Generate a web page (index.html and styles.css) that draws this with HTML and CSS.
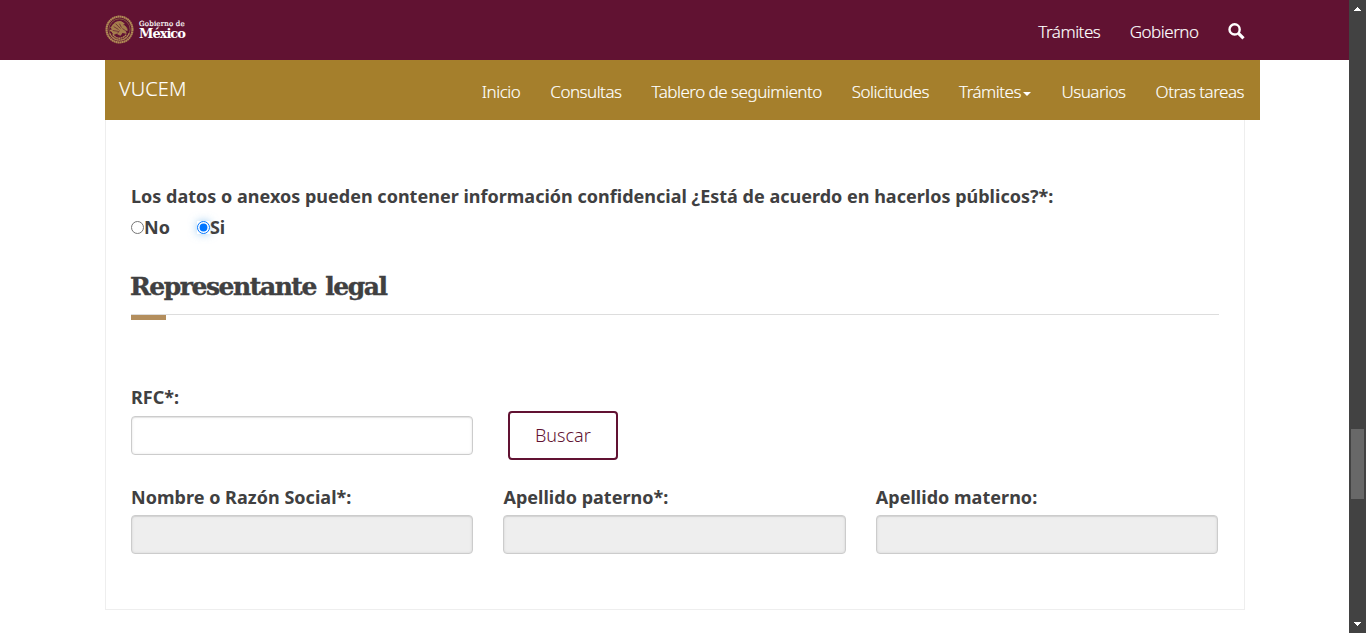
FILE: index.html
```html
<!DOCTYPE html>
<html lang="es">
<head>
<meta charset="utf-8">
<title>VUCEM</title>
<link rel="stylesheet" href="styles.css">
</head>
<body>
<div class="page">
  <header class="gov-bar">
    <div class="gov-inner">
      <a class="gov-logo">
        <svg class="seal" viewBox="0 0 30 30" fill="none" stroke="#b08b55">
          <circle cx="15" cy="15" r="13.4" stroke-width="2.2" stroke-dasharray="1.8 .3"/>
          <circle cx="15" cy="15" r="11" stroke-width=".8" stroke="#8e6642"/>
          <path d="M7 12c2-4 6-6 10-5l3 2-3 1c3 0 6 3 6 6l-3-1 2 4-4-1-2 3-4-2-3 1-2-3-2-1 3-1-2-2z" fill="#a47d4b" stroke-width=".8"/>
          <path d="M9 12l5 3M11 9l5 5M8 16l6 1M15 9l2 4M18 14l3 2M13 19l2-3" stroke="#611232" stroke-width=".7"/>
          <path d="M5 19c2 5 6 7 10 7s8-2 10-7M8 20c2 3 4 4 7 4s6-2 7-4" stroke-width="1.4" stroke-dasharray="2 .4"/>
        </svg>
        <span class="gov-name"><span class="gov-small">Gobierno de</span><span class="gov-big">México</span></span>
      </a>
      <nav class="gov-nav">
        <a>Trámites</a>
        <a>Gobierno</a>
        <svg class="search" viewBox="0 0 17 17" fill="none" stroke="#fff"><circle cx="6.6" cy="6.4" r="5.1" stroke-width="2.4"/><path d="M10.5 10.3l5 5" stroke-width="3.2"/></svg>
      </nav>
    </div>
  </header>
  <div class="sub-bar">
    <a class="brand">VUCEM</a>
    <nav class="sub-nav">
      <a>Inicio</a><a>Consultas</a><a>Tablero de seguimiento</a><a>Solicitudes</a><a>Trámites<i class="caret"></i></a><a>Usuarios</a><a>Otras tareas</a>
    </nav>
  </div>
  <main class="panel">
    <p class="question">Los datos o anexos pueden contener información confidencial ¿Está de acuerdo en hacerlos públicos?*:</p>
    <div class="radios">
      <label class="option"><input type="radio" name="publico">No</label>
      <label class="option"><input class="glow" type="radio" name="publico" checked>Si</label>
    </div>
    <h3 class="title"><span class="title-text">Representante legal</span></h3>
    <div class="accent"></div>
    <div class="grid rfc-row">
      <div class="field"><label>RFC*:</label><input type="text"></div>
      <button class="buscar" type="button">Buscar</button>
    </div>
    <div class="grid names-row">
      <div class="field"><label>Nombre o Razón Social*:</label><input type="text" disabled></div>
      <div class="field"><label>Apellido paterno*:</label><input type="text" disabled></div>
      <div class="field"><label>Apellido materno:</label><input type="text" disabled></div>
    </div>
  </main>
</div>
<div class="scrollbar">
  <svg class="arrow" viewBox="0 0 7 4" shape-rendering="crispEdges"><path d="M0 4V3h1V2h1V1h1V0h1v1h1v1h1v1h1v1z" fill="#fff"/></svg>
  <div class="thumb"></div>
  <svg class="arrow" viewBox="0 0 7 4" shape-rendering="crispEdges"><path d="M0 0v1h1v1h1v1h1v1h1V3h1V2h1V1h1V0z" fill="#fff"/></svg>
</div>
</body>
</html>
```
FILE: styles.css
```css
* { box-sizing: border-box; }
body {
  margin: 0;
  height: 633px;
  overflow: hidden;
  display: flex;
  background: #fff;
  color: #404041;
  font-family: "Noto Sans", sans-serif;
  font-size: 18px;
}
.page { flex: 1; min-width: 0; }
.gov-bar { height: 60px; background: #611232; }
.gov-inner {
  width: 1140px;
  height: 60px;
  margin-left: 105px;
  display: flex;
  justify-content: space-between;
}
.gov-logo { display: flex; padding-top: 15px; gap: 5px; color: #fff; }
.seal { width: 29px; height: 29px; }
.gov-name {
  display: flex;
  flex-direction: column;
  padding-top: 5px;
  font-family: "DejaVu Serif", serif;
  white-space: nowrap;
}
.gov-small { font-size: 7px; line-height: 8px; letter-spacing: .2px; -webkit-text-stroke: .2px #fff; }
.gov-big { font-size: 13px; line-height: 11px; font-weight: bold; letter-spacing: -1px; }
.gov-nav,
.sub-nav {
  display: flex;
  gap: 30px;
  padding-top: 20px;
  color: #fff;
  font-size: 17px;
  font-weight: 300;
  line-height: 24px;
  letter-spacing: -.5px;
  white-space: nowrap;
  -webkit-text-stroke: .2px rgba(255, 255, 255, .8);
}
.gov-nav { gap: 29.5px; }
.search { width: 17px; height: 17px; margin-top: 3px; }
.sub-bar {
  width: 1155px;
  height: 60px;
  margin-left: 105px;
  padding: 0 16px 0 14px;
  background: #a57f2c;
  color: #fff;
  display: flex;
  justify-content: space-between;
}
.brand { font-size: 20px; font-weight: 300; line-height: 28px; padding-top: 15px; letter-spacing: .1px; -webkit-text-stroke: .2px rgba(255, 255, 255, .7); }
.caret {
  display: inline-block;
  margin: 2px 0 0 2.5px;
  vertical-align: middle;
  border-top: 4px solid #fff;
  border-left: 4px solid transparent;
  border-right: 4px solid transparent;
}
.panel {
  width: 1140px;
  height: 490px;
  margin-left: 105px;
  padding: 63px 25px 0;
  border: 1px solid #eee;
  border-top: 0;
}
.question { margin: 0; line-height: 26px; font-weight: 700; white-space: nowrap; letter-spacing: .01px; }
.radios { display: flex; gap: 27px; margin-top: 5px; height: 26px; }
.option { display: flex; align-items: center; font-weight: 700; line-height: 26px; }
.option input { width: 13px; height: 13px; margin: 0; }
.glow { border-radius: 50%; box-shadow: 0 0 8px rgba(102, 175, 233, .6); }
.title {
  margin: 27px 0 0;
  height: 48px;
  border-bottom: 1px solid #ddd;
  font: bold 25px/39px "DejaVu Serif", serif;
  white-space: nowrap;
}
.title-text { display: inline-block; margin-left: -1px; letter-spacing: -1.45px; word-spacing: 2px; -webkit-text-stroke: .4px #404041; }
.accent { width: 35px; height: 5px; background: #b38e5d; }
.grid { display: grid; grid-template-columns: repeat(3, 342.4px); column-gap: 30px; }
.rfc-row { margin-top: 64px; height: 100px; }
.field { display: flex; flex-direction: column; }
.field label { line-height: 26px; height: 32px; font-weight: 700; letter-spacing: .03px; }
.names-row .field label { height: 31px; }
.field input {
  width: 100%;
  height: 39px;
  border: 1px solid #ccc;
  border-radius: 4px;
  background: #fff;
  box-shadow: inset 0 1px 1px rgba(0, 0, 0, .075), inset 0 0 3px rgba(0, 0, 0, .1);
}
.field input:disabled { background: #eee; }
.buscar {
  width: 110px;
  height: 49px;
  margin: 27px 0 0 4.5px;
  padding: 0 0 2px;
  border: 2px solid #611232;
  border-radius: 4px;
  background: #fff;
  color: #611232;
  font: 300 18px/24px "Noto Sans", sans-serif;
}
.scrollbar {
  width: 17px;
  height: 633px;
  background: #424242;
  display: flex;
  flex-direction: column;
  align-items: center;
  padding: 7px 0;
}
.arrow { width: 7px; height: 4px; }
.thumb { width: 13px; height: 70px; margin: 418px 0 123px; background: #686868; }
```
